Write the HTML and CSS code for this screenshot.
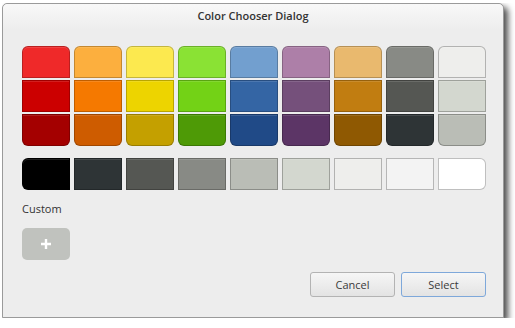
FILE: index.html
```html
<!DOCTYPE html>
<html lang="en">
<head>
    <meta charset="UTF-8">
    <title>Color Chooser Dialog</title>
    <link rel="stylesheet" href="styles.css">
</head>
<body>
<div class="window">
    <div class="titlebar">Color Chooser Dialog</div>
    <div class="content">
        <div class="palette">
            <div class="swatch top" style="background:#ef2929"></div>
            <div class="swatch top" style="background:#fcaf3e"></div>
            <div class="swatch top" style="background:#fce94f"></div>
            <div class="swatch top" style="background:#8ae234"></div>
            <div class="swatch top" style="background:#729fcf"></div>
            <div class="swatch top" style="background:#ad7fa8"></div>
            <div class="swatch top" style="background:#e9b96e"></div>
            <div class="swatch top" style="background:#888a85"></div>
            <div class="swatch top light" style="background:#eeeeec"></div>

            <div class="swatch" style="background:#cc0000"></div>
            <div class="swatch" style="background:#f57900"></div>
            <div class="swatch" style="background:#edd400"></div>
            <div class="swatch" style="background:#73d216"></div>
            <div class="swatch" style="background:#3465a4"></div>
            <div class="swatch" style="background:#75507b"></div>
            <div class="swatch" style="background:#c17d11"></div>
            <div class="swatch" style="background:#555753"></div>
            <div class="swatch light" style="background:#d3d7cf"></div>

            <div class="swatch bottom" style="background:#a40000"></div>
            <div class="swatch bottom" style="background:#ce5c00"></div>
            <div class="swatch bottom" style="background:#c4a000"></div>
            <div class="swatch bottom" style="background:#4e9a06"></div>
            <div class="swatch bottom" style="background:#204a87"></div>
            <div class="swatch bottom" style="background:#5c3566"></div>
            <div class="swatch bottom" style="background:#8f5902"></div>
            <div class="swatch bottom" style="background:#2e3436"></div>
            <div class="swatch bottom light" style="background:#babdb6"></div>
        </div>

        <div class="palette greys">
            <div class="swatch first" style="background:#000000"></div>
            <div class="swatch" style="background:#2e3436"></div>
            <div class="swatch" style="background:#555753"></div>
            <div class="swatch" style="background:#888a85"></div>
            <div class="swatch light" style="background:#babdb6"></div>
            <div class="swatch light" style="background:#d3d7cf"></div>
            <div class="swatch light" style="background:#eeeeec"></div>
            <div class="swatch light" style="background:#f3f3f3"></div>
            <div class="swatch last light" style="background:#ffffff"></div>
        </div>

        <div class="custom-label">Custom</div>
        <button class="add-custom" type="button">
            <svg width="12" height="12" viewBox="0 0 12 12"><path d="M6 1v10M1 6h10" stroke="#fff" stroke-width="2.4"/></svg>
        </button>

        <div class="actions">
            <button type="button" class="btn">Cancel</button>
            <button type="button" class="btn focused">Select</button>
        </div>
    </div>
</div>
</body>
</html>
```

FILE: styles.css
```css
body { margin: 3px 0 0 2px; background: #fff; font-family: "Open Sans", "DejaVu Sans", sans-serif; }

.window {
    width: 502px; height: 315px; box-sizing: border-box;
    background: #ededed; border: 1px solid #9a9a9a; border-radius: 5px 5px 0 0;
    box-shadow: 4px 4px 6px rgba(0,0,0,0.7);
}
.titlebar {
    height: 26px; line-height: 24px; text-align: center;
    font-size: 11px; font-weight: 600; color: #333;
    background: linear-gradient(#f8f8f8, #ededed);
    border-radius: 5px 5px 0 0;
}
.content { padding: 16px 17px 0 19px; }

.palette {
    display: grid; grid-template-columns: repeat(9, 48px); grid-auto-rows: 32px;
    column-gap: 4px; row-gap: 2px;
}
.palette.greys { margin-top: 12px; }
.swatch {
    box-sizing: border-box; border: 1px solid rgba(0,0,0,0.22);
    box-shadow: inset 0 1px rgba(255,255,255,0.12);
}
.swatch.light { border-color: rgba(0,0,0,0.25); }
.swatch.top { border-radius: 6px 6px 0 0; }
.swatch.bottom { border-radius: 0 0 6px 6px; }
.swatch.first { border-radius: 6px 0 0 6px; }
.swatch.last { border-radius: 0 6px 6px 0; }

.custom-label { margin-top: 12px; font-size: 11px; line-height: 14px; color: #333; }

.add-custom {
    display: flex; align-items: center; justify-content: center;
    margin-top: 12px; width: 48px; height: 32px; padding: 0;
    background: #c0c2be; border: none; border-radius: 5px;
}

.actions { display: flex; justify-content: flex-end; gap: 6px; margin-top: 12px; }
.btn {
    width: 85px; height: 25px; padding: 0;
    font-family: "Open Sans", "DejaVu Sans", sans-serif; font-size: 11px; color: #3a3a3a;
    background: linear-gradient(#f6f6f6, #e3e3e3);
    border: 1px solid #b3b3b3; border-radius: 3px;
}
.btn.focused { border-color: #7ea8da; }
```
